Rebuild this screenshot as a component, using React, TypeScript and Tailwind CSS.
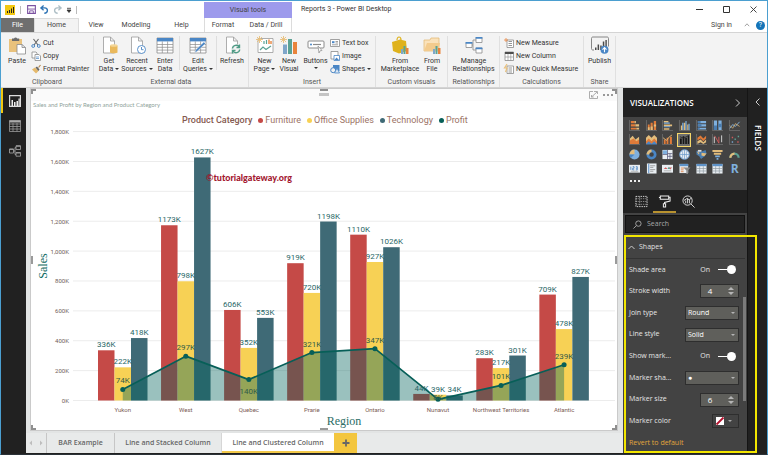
import React from "react";

const BLUE = "#4a86c5";
const STEEL = "#7fa6c9";
const ORANGE = "#e8843c";
const TAN = "#e9c07a";
const GREY = "#8a8a8a";
const TEAL = "#5ba294";

type IconProps = { children: React.ReactNode; box?: string; className?: string };

function Icon({ children, box = "0 0 18 18", className = "size-[18px]" }: IconProps) {
  return (
    <svg viewBox={box} className={`shrink-0 overflow-visible ${className}`} fill="none" aria-hidden="true">
      {children}
    </svg>
  );
}

/* ---------- Ribbon icons ---------- */

const page = <path d="M3.5 1h7l4 4v12h-11z M10.5 1v4h4" fill="#fff" stroke="#9a9a9a" strokeWidth=".8" />;
const tableArt = (
  <>
    <path d="M1 2h16v15H1z" fill="#fff" stroke={GREY} strokeWidth=".8" />
    <path d="M1 2h16v3.4H1z" fill={BLUE} />
    <path d="M1 8.5h16M1 11.3h16M1 14.1h16M6.3 5.4V17M11.6 5.4V17" stroke={GREY} strokeWidth=".7" />
  </>
);

const art = {
  paste: (
    <>
      <path d="M1 3h13v13H1z" fill="#e9c27c" />
      <path d="M4 2.5h2a1.8 1.8 0 0 1 3.2 0h2V5H4z" fill="#6c6c6c" />
      <path d="M9 8.500h5l3.500 3v6.500H9z M14 8.500v3h3.500" fill="#fff" stroke={GREY} strokeWidth=".8" />
    </>
  ),
  getData: (
    <>
      {page}
      <path d="M10 9.500v7c0 1 7.500 1 7.500 0v-7z" fill="#eab95c" />
      <ellipse cx="13.750" cy="9.500" rx="3.750" ry="1.300" fill="#f4d697" />
    </>
  ),
  recent: (
    <>
      {page}
      <circle cx="13.500" cy="13.500" r="4" fill="#fff" stroke={BLUE} strokeWidth=".9" />
      <path d="M13.500 11v2.700h2" stroke={BLUE} strokeWidth=".9" />
    </>
  ),
  table: tableArt,
  edit: (
    <>
      {tableArt}
      <path d="M16.500 7.500 8.500 15l-2.500 2 .8-3.200 8-7.800z" fill={BLUE} stroke="#fff" strokeWidth=".4" />
    </>
  ),
  refresh: (
    <>
      {page}
      <circle cx="13" cy="13" r="4.800" fill="#f3f3f3" />
      <path d="M9.500 12.500a3.700 3.700 0 0 1 6.800-1.500M16.500 8.500v3h-3M16.700 13.500a3.700 3.700 0 0 1-6.800 1.500M9.500 17.500v-3h3" stroke="#4f9b86" strokeWidth="1.400" />
    </>
  ),
  newPage: (
    <>
      <path d="M2 2.500h15v14H2z" fill="#fff" stroke="#9a9a9a" strokeWidth=".8" />
      <path d="m4 14 3-3 3 2.500 5-3.500M8 8V5M10.500 8V4" stroke={TEAL} strokeWidth="1.200" />
      <path d="M13 8V3.500M15 8V5" stroke={ORANGE} strokeWidth="1.400" />
      <path d="M3.500 0v7M0 3.500h7M1 1l5 5M6 1 1 6" stroke={TAN} strokeWidth=".9" />
    </>
  ),
  newVisual: (
    <>
      <path d="M3 8.500h4V18H3z" fill={STEEL} />
      <path d="M8 3h4v15H8z" fill={TEAL} />
      <path d="M13 6h4v12h-4z" fill={ORANGE} />
      <path d="M3.500 0v7M0 3.500h7M1 1l5 5M6 1 1 6" stroke={TAN} strokeWidth=".9" />
    </>
  ),
  buttons: (
    <>
      <rect x="1" y="5" width="16" height="7" rx="1" fill="#fff" stroke={GREY} />
      <circle cx="4" cy="8.500" r="1" fill={BLUE} />
      <path d="M6 8.500h8" stroke={GREY} strokeWidth="1.200" />
      <path d="m11 10 4 4.500-2 .3-1 2.200z" fill="#fff" stroke={GREY} strokeWidth=".7" />
    </>
  ),
  market: (
    <>
      <path d="M6 4c0-4 4-4 4 0" stroke="#dfb21c" strokeWidth="1.200" />
      <path d="m1 6 8-2.500 6 1.500 1 10-8 2.500L2 15z" fill="#dfb21c" />
      <path d="M10 13h2v5h-2z" fill={STEEL} />
      <path d="M12.500 10h2v8h-2z" fill={TEAL} />
      <path d="M15 12h2.500v6H15z" fill={ORANGE} />
    </>
  ),
  file: (
    <>
      <path d="M1 15V4h6l1-2h8v13z" fill="#fae2bb" stroke="#e3bb7a" strokeWidth=".8" />
      <path d="m1 15 3-8h13l-2 8z" fill="#f3cb8d" />
      <path d="M10 13h2v5h-2z" fill={STEEL} />
      <path d="M12.500 10h2v8h-2z" fill={TEAL} />
      <path d="M15 12h2.500v6H15z" fill={ORANGE} />
    </>
  ),
  relations: (
    <>
      <path d="M4 9h4V4h3M8 9v5h3" stroke={GREY} strokeWidth=".8" />
      <path d="M1 6.500h6v5H1zM11 1.500h6v5h-6zM11 12h6v5h-6z" fill="#fff" stroke={GREY} strokeWidth=".8" />
      <path d="M.6 6h6.800v1.800H.6zM10.600 1h6.800v1.800h-6.800zM10.600 11.500h6.800v1.800h-6.800z" fill={BLUE} />
    </>
  ),
  publish: (
    <>
      <path d="M3 14H2c-1 0-1.500-.5-1.500-1.500v-10C.5 1.500 1 1 2 1h14c1 0 1.500.500 1.500 1.500v8" stroke="#6a6a6a" strokeWidth=".8" />
      <path d="M4 11.500h1.500V14H4zM6.600 8.500h1.500V14H6.600zM9.200 9.500h1.500V14H9.200zM11.800 5.500h1.500V12h-1.500zM14.400 4h1.400v7h-1.400z" fill="#4a4a4a" />
      <circle cx="13.500" cy="13.800" r="4" fill={BLUE} />
      <path d="M13.500 16.300v-4.500m-2 1.800 2-2 2 2" stroke="#fff" strokeWidth="1.100" />
    </>
  ),
};

const smallArt = {
  cut: (
    <>
      <path d="M2.500 1 7 7M7.500 1 3 7" stroke="#666" strokeWidth="1.100" />
      <circle cx="2.200" cy="8" r="1.400" stroke={BLUE} />
      <circle cx="7.800" cy="8" r="1.400" stroke={BLUE} />
    </>
  ),
  copy: (
    <>
      <path d="M1 1h4l1 1v5H1z" fill="#fff" stroke={GREY} strokeWidth=".8" />
      <path d="M4 3.500h4l1.500 1.500v4.500H4z" fill="#fff" stroke={GREY} strokeWidth=".8" />
      <path d="M5 6h3M5 7.500h3" stroke={BLUE} strokeWidth=".7" />
    </>
  ),
  painter: (
    <>
      <path d="m1 5.500 3-2 3.500 3.500L5 9.500z" fill="#e5b96b" />
      <path d="m4.500 3.500 1.500-1 2.500 3L7.300 7z" fill="#666" />
      <path d="M7.500 3.500 9.500 1" stroke="#b4864a" strokeWidth="1.200" />
    </>
  ),
  textBox: (
    <>
      <path d="M.5 1.500h9v7h-9z" fill="#fff" stroke={GREY} strokeWidth=".8" />
      <path d="M2 3.200h2.500v2H2z" fill={BLUE} />
      <path d="M5.500 3.500H8M5.500 5H8M2 6.800h6" stroke="#777" strokeWidth=".7" />
    </>
  ),
  image: (
    <>
      <path d="M1 .5h7v7.500H1z" fill="#fff" stroke={GREY} strokeWidth=".8" />
      <path d="M4 4.500h5.500v5H4z" fill="#fff" stroke={BLUE} strokeWidth=".8" />
      <path d="m4.500 9 2-2.500L9 9z" fill={BLUE} />
    </>
  ),
  shapes: (
    <>
      <path d="M3 1h6.500v6H3z" fill={BLUE} />
      <circle cx="3.200" cy="6.200" r="2.500" fill="#f3f3f3" stroke={BLUE} />
      <path d="m7 4 2.500 5h-5z" fill="#dbe8f5" stroke={BLUE} strokeWidth=".8" />
    </>
  ),
  measure: (
    <>
      <path d="M3 2h6.500v7.500H3z" fill="#fff" stroke={GREY} strokeWidth=".8" />
      <path d="M4.500 3.500H8M4.500 5.500H8M4.500 7.500H8" stroke={GREY} strokeWidth=".9" />
      <path d="M2 0v4M0 2h4" stroke={ORANGE} strokeWidth=".8" />
    </>
  ),
  column: (
    <>
      <path d="M1 1h8.500v8.500H1z" fill="#fff" stroke={GREY} strokeWidth=".8" />
      <path d="M1 1h8.500v2H1z" fill="#4d4d4d" />
      <path d="M4 3v6.500M6.800 3v6.500M1 6h8.500" stroke={GREY} strokeWidth=".6" />
    </>
  ),
  quick: (
    <>
      <path d="M3 2h6.500v7.500H3z" fill="#fff" stroke={GREY} strokeWidth=".8" />
      <path d="M4.500 4H8M4.500 6H8M4.500 8H8" stroke={GREY} strokeWidth=".9" />
      <path d="M3 0 .5 4H3L1.500 8" stroke={TAN} strokeWidth="1.200" />
    </>
  ),
};

function Caret() {
  return <span className="ml-[2px] inline-block border-x-2 border-t-2 border-x-transparent border-t-[#333] align-middle" />;
}

type BigButtonProps = { icon: keyof typeof art; lines: string[]; width: string; caret?: "inline" | "below" };

function BigButton({ icon, lines, width, caret }: BigButtonProps) {
  return (
    <button className={`flex shrink-0 flex-col items-center whitespace-nowrap ${width}`}>
      <Icon>{art[icon]}</Icon>
      <span className="mt-[3px] text-center leading-[8px]">
        {lines.map((line, i) => (
          <span key={line} className="block">
            {line}
            {caret === "inline" && i === lines.length - 1 && <Caret />}
          </span>
        ))}
        {caret === "below" && <span className="block leading-[6px]"><Caret /></span>}
      </span>
    </button>
  );
}

function SmallButton({ icon, label, caret }: { icon: keyof typeof smallArt; label: string; caret?: boolean }) {
  return (
    <button className="flex h-[13px] items-center gap-[2px] whitespace-nowrap leading-[8px]">
      <Icon box="0 0 10 10" className="size-[10px]">{smallArt[icon]}</Icon>
      <span>{label}{caret && <Caret />}</span>
    </button>
  );
}

function Group({ label, width, pad = "pl-0", children }: { label: string; width: string; pad?: string; children: React.ReactNode }) {
  return (
    <section className={`flex shrink-0 flex-col border-r border-[#e0e0e0] ${width}`}>
      <div className={`flex flex-1 items-start ${pad}`}>{children}</div>
      <h2 className="text-center leading-[10px] text-[#555]">{label}</h2>
    </section>
  );
}

function Stack({ children }: { children: React.ReactNode }) {
  return <div className="flex flex-col">{children}</div>;
}

const Rule = () => <span className="h-[34px] w-px shrink-0 bg-[#dedede]" />;

function Ribbon() {
  return (
    <div className="flex h-[56px] shrink-0 border-y border-[#d4d4d4] bg-[#f3f3f3] pt-[3px] font-[Roboto,sans-serif] text-[7px] text-[#333]">
      <Group label="Clipboard" width="w-[93px]" pad="pl-[2px]">
        <BigButton icon="paste" lines={["Paste"]} width="w-[28px]" />
        <Stack>
          <SmallButton icon="cut" label="Cut" />
          <SmallButton icon="copy" label="Copy" />
          <SmallButton icon="painter" label="Format Painter" />
        </Stack>
      </Group>
      <Group label="External data" width="w-[155px]" pad="pl-[1px]">
        <BigButton icon="getData" lines={["Get", "Data"]} width="w-[28px]" caret="inline" />
        <BigButton icon="recent" lines={["Recent", "Sources"]} width="w-[28px]" caret="inline" />
        <BigButton icon="table" lines={["Enter", "Data"]} width="w-[28px]" />
        <Rule />
        <BigButton icon="edit" lines={["Edit", "Queries"]} width="w-[36px]" caret="inline" />
        <Rule />
        <BigButton icon="refresh" lines={["Refresh"]} width="w-[30px]" />
      </Group>
      <Group label="Insert" width="w-[127px]" pad="pl-[3px]">
        <BigButton icon="newPage" lines={["New", "Page"]} width="w-[25px]" caret="inline" />
        <BigButton icon="newVisual" lines={["New", "Visual"]} width="w-[24px]" />
        <BigButton icon="buttons" lines={["Buttons"]} width="w-[29px]" caret="below" />
        <Stack>
          <SmallButton icon="textBox" label="Text box" />
          <SmallButton icon="image" label="Image" />
          <SmallButton icon="shapes" label="Shapes" caret />
        </Stack>
      </Group>
      <Group label="Custom visuals" width="w-[72px]" pad="pl-[3px]">
        <BigButton icon="market" lines={["From", "Marketplace"]} width="w-[42px]" />
        <BigButton icon="file" lines={["From", "File"]} width="w-[22px]" />
      </Group>
      <Group label="Relationships" width="w-[52px]">
        <BigButton icon="relations" lines={["Manage", "Relationships"]} width="w-full" />
      </Group>
      <Group label="Calculations" width="w-[84px]" pad="pl-[4px]">
        <Stack>
          <SmallButton icon="measure" label="New Measure" />
          <SmallButton icon="column" label="New Column" />
          <SmallButton icon="quick" label="New Quick Measure" />
        </Stack>
      </Group>
      <Group label="Share" width="w-[32px]">
        <BigButton icon="publish" lines={["Publish"]} width="w-full" />
      </Group>
    </div>
  );
}

/* ---------- Title bar and ribbon tabs ---------- */

function TitleBar() {
  return (
    <header className="flex h-[17px] shrink-0 bg-white font-[Roboto,sans-serif]">
      <div className="flex w-[203px] items-center pl-[4px]">
        <Icon box="0 0 10 10" className="size-[10px]">
          <path d="M0 0h10v10H0z" fill="#f2c811" />
          <path d="M2 6h1v2H2zM4 5h1v3H4zM6 3.500h1V8H6zM8 2h1v6H8z" fill="#222" />
        </Icon>
        <span className="mx-[5px] h-[8px] w-px bg-[#bbb]" />
        <button aria-label="Save" className="ml-[1px]">
          <Icon box="0 0 10 10" className="size-[9px]">
            <path d="M.7.700h8.600v8.600H.700z" stroke="#7b52a1" strokeWidth="1.200" />
            <path d="M1 4.500h8M3 9V6.500h4V9" stroke="#7b52a1" />
          </Icon>
        </button>
        <button aria-label="Undo" className="ml-[4px]">
          <Icon box="0 0 10 10" className="size-[9px]">
            <path d="M4 .5 1 3.200l3 2.700M1.500 3.200h3.800c4 0 4 6-.5 6" stroke="#2f74b5" strokeWidth="1.500" />
          </Icon>
        </button>
        <button aria-label="Redo" className="ml-[4px]">
          <Icon box="0 0 10 10" className="size-[9px]">
            <path d="m6 .5 3 2.700-3 2.700M8.500 3.200H4.700c-4 0-4 6 .5 6" stroke="#aebfc6" strokeWidth="1.500" />
          </Icon>
        </button>
        <button aria-label="Customize toolbar" className="ml-[4px]">
          <Icon box="0 0 6 6" className="size-[6px]">
            <path d="M1 1.300h4M1 3h4L3 5.500z" stroke="#333" strokeWidth=".8" fill="#333" />
          </Icon>
        </button>
        <span className="ml-[4px] h-[8px] w-px bg-[#bbb]" />
      </div>
      <div className="mt-px flex w-[88px] items-center justify-center bg-[#9d9aec] text-[7px] text-[#444]">Visual tools</div>
      <h1 className="ml-[9px] text-[7px] leading-[17px] text-[#333]">Reports 3 - Power BI Desktop</h1>
      <div className="ml-auto flex items-center gap-[20px] pr-[10px]">
        <button aria-label="Minimize"><Icon box="0 0 7 7" className="size-[7px]"><path d="M0 3.500h7" stroke="#333" /></Icon></button>
        <button aria-label="Maximize"><Icon box="0 0 7 7" className="size-[7px]"><path d="M.5.500h6v6h-6z" stroke="#333" /></Icon></button>
        <button aria-label="Close"><Icon box="0 0 7 7" className="size-[7px]"><path d="m.5.500 6 6m0-6-6 6" stroke="#333" strokeWidth=".9" /></Icon></button>
      </div>
    </header>
  );
}

function Tabs() {
  return (
    <nav className="flex h-[14px] shrink-0 bg-white font-[Roboto,sans-serif] text-[7px] leading-[14px] text-[#444]">
      <button className="w-[33px] bg-[#6f6f6f] text-white">File</button>
      <button className="-mb-px w-[45px] border border-b-0 border-[#dcdcdc] bg-[#f3f3f3] pb-px leading-[13px]">Home</button>
      <button className="w-[34px]">View</button>
      <button className="w-[46px]">Modeling</button>
      <button className="w-[45px]">Help</button>
      <div className="flex w-[88px] border-x border-[#dcdcdc]">
        <button className="w-[36px]">Format</button>
        <button className="flex-1">Data / Drill</button>
      </div>
      <div className="ml-auto flex items-center pr-[2px]">
        <button>Sign in</button>
        <button aria-label="Collapse ribbon" className="ml-[12px]">
          <Icon box="0 0 6 6" className="size-[6px]"><path d="m.8 4.200 2.200-2.400 2.200 2.400" stroke={GREY} strokeWidth=".8" /></Icon>
        </button>
        <button className="ml-[6px] size-[9px] rounded-full bg-[#1474b8] text-[7px] leading-[9px] text-white">?</button>
      </div>
    </nav>
  );
}

/* ---------- Chart ---------- */

const data = [
  { name: "Yukon", bars: [336, 222, 418], profit: 74 },
  { name: "West", bars: [1173, 798, 1627], profit: 297 },
  { name: "Quebec", bars: [606, 352, 553], profit: 140, below: true },
  { name: "Prarie", bars: [919, 720, 1198], profit: 321 },
  { name: "Ontario", bars: [1110, 927, 1026], profit: 347 },
  { name: "Nunavut", bars: [44, 39, 34], profit: 8 },
  { name: "Northwest Territories", bars: [283, 217, 301], profit: 101 },
  { name: "Atlantic", bars: [709, 478, 827], profit: 239 },
];
const barFills = ["#c54a47", "#f7d155", "#3f6a76"];
const BASE = 272.5;
const BAR = 16.5;
const yOf = (v: number) => BASE - v * 0.1494;
const groupX = (i: number) => 67 + i * 63.05;
const midX = (i: number) => groupX(i) + BAR * 1.5;
const ticks = [0, 200, 400, 600, 800, 1000, 1200, 1400, 1600, 1800];

function Plot() {
  const line = data.map((d, i) => `${midX(i)},${yOf(d.profit)}`).join(" ");
  return (
    <svg viewBox="0 0 586 302" className="min-h-0 w-full flex-1 font-[Roboto,sans-serif]" role="img" aria-label="Sales and Profit by Region and Product Category">
      {ticks.map((t) => (
        <g key={t}>
          <path d={`M42 ${yOf(t)}H584`} stroke="#ececec" strokeWidth="1" />
          <text x="38" y={yOf(t) + 2.5} textAnchor="end" fontSize="6" fill="#6f5c58">{`${t.toLocaleString("en-US")}K`}</text>
        </g>
      ))}
      {data.map((d, i) =>
        d.bars.map((v, j) => (
          <rect key={`${d.name}${j}`} x={groupX(i) + j * BAR} y={yOf(v)} width={BAR} height={v * 0.1494} fill={barFills[j]} />
        )),
      )}
      <polygon points={`${midX(0)},${BASE} ${line} ${midX(7)},${BASE}`} fill="#02645c" fillOpacity=".4" />
      <polyline points={line} fill="none" stroke="#075f58" strokeWidth="1.700" strokeLinejoin="round" />
      {data.map((d, i) => (
        <g key={d.name} textAnchor="middle">
          <circle cx={midX(i)} cy={yOf(d.profit)} r="2.500" fill="#075f58" />
          {d.bars.map((v, j) => (
            <text key={j} x={groupX(i) + (j + 0.5) * BAR} y={yOf(v) - 3} fontSize="8" fill="#2a6768">{`${v}K`}</text>
          ))}
          <text x={midX(i)} y={yOf(d.profit) + (d.below ? 14 : d.profit < 10 ? 1 : -6)} fontSize="8" fill="#335c48">{`${d.profit}K`}</text>
          <text x={midX(i)} y="284" fontSize="6" fill="#7c5c55">{d.name}</text>
        </g>
      ))}
      <text x="313" y="297" textAnchor="middle" fontSize="12" fill="#2c6d66" className="font-['Liberation_Serif',serif]">Region</text>
      <text x="16" y="138" textAnchor="middle" fontSize="12" fill="#0d6b62" transform="rotate(-90 16 138)" className="font-['Liberation_Serif',serif]">Sales</text>
      <text x="175" y="53" fontSize="9" fontWeight="900" fill="#a3182f" className="font-[Lato,sans-serif]">©tutorialgateway.org</text>
    </svg>
  );
}

function LegendItem({ dot, label }: { dot: string; label: string }) {
  return (
    <li className="flex items-center gap-[2px]">
      <span className={`size-[5px] rounded-full ${dot}`} />
      {label}
    </li>
  );
}

function Visual() {
  return (
    <div className="relative flex min-h-0 flex-1 flex-col border border-[#cacaca] bg-white">
      <div className="flex h-[12px] shrink-0 items-center justify-end gap-[5px] bg-[#fafafa] pr-[4px]">
        <button aria-label="Focus mode">
          <Icon box="0 0 9 8" className="h-[8px] w-[9px]"><path d="M4 .5H.5v7h8V5M5 .5h3.500V3M8 1 2.500 6M2.500 4v2h2.200" stroke="#999" strokeWidth=".8" /></Icon>
        </button>
        <button aria-label="More options" className="flex gap-[2px]">
          <i className="size-[2px] bg-[#999]" /><i className="size-[2px] bg-[#999]" /><i className="size-[2px] bg-[#999]" />
        </button>
      </div>
      <h2 className="h-[11px] shrink-0 pl-[2px] font-[Lato,sans-serif] text-[6px] leading-[8px] text-[#8fa39b]">Sales and Profit by Region and Product Category</h2>
      <ul className="flex h-[16px] shrink-0 items-center gap-[6px] pl-[151px] font-[Roboto,sans-serif] text-[9px] leading-[16px] whitespace-nowrap text-[#9b7265]">
        <li className="font-medium text-[#855a50]">Product Category</li>
        <LegendItem dot="bg-[#c54a47]" label="Furniture" />
        <LegendItem dot="bg-[#f7d155]" label="Office Supplies" />
        <LegendItem dot="bg-[#3f6a76]" label="Technology" />
        <LegendItem dot="bg-[#075f58]" label="Profit" />
      </ul>
      <Plot />
      <span className="absolute top-0 left-0 size-[5px] border-t-2 border-l-2 border-[#8f8f8f]" />
      <span className="absolute top-0 right-0 size-[5px] border-t-2 border-r-2 border-[#8f8f8f]" />
      <span className="absolute bottom-0 left-0 size-[5px] border-b-2 border-l-2 border-[#8f8f8f]" />
      <span className="absolute right-0 bottom-0 size-[5px] border-r-2 border-b-2 border-[#8f8f8f]" />
      <span className="absolute top-1/2 left-0 h-[8px] w-[2px] -translate-y-1/2 bg-[#9a9a9a]" />
      <span className="absolute top-1/2 right-0 h-[8px] w-[2px] -translate-y-1/2 bg-[#9a9a9a]" />
      <span className="absolute top-0 left-1/2 h-[2px] w-[8px] -translate-x-1/2 bg-[#8f8f8f]" />
      <span className="absolute top-[4px] left-1/2 h-[3px] w-[10px] -translate-x-1/2 bg-[#c4c4c4]" />
      <span className="absolute bottom-0 left-1/2 h-[2px] w-[8px] -translate-x-1/2 bg-[#9a9a9a]" />
    </div>
  );
}

function PageTabs() {
  return (
    <nav className="flex h-[20px] shrink-0 bg-[#e8eaea] text-[7px] text-[#666]">
      <button aria-label="Previous page" className="w-[10px] text-[#bbb]">
        <Icon box="0 0 4 6" className="mx-auto h-[6px] w-[4px]"><path d="M3 .5v5L.5 3z" fill="#bdbdbd" /></Icon>
      </button>
      <button aria-label="Next page" className="w-[11px] border-r border-[#c6c6c6]">
        <Icon box="0 0 4 6" className="mx-auto h-[6px] w-[4px]"><path d="M1 .5v5L3.500 3z" fill="#bdbdbd" /></Icon>
      </button>
      <button className="w-[68px] border-r border-[#c6c6c6] font-semibold">BAR Example</button>
      <button className="w-[107px] border-r border-[#d6d6d6] font-semibold">Line and Stacked Column</button>
      <button className="w-[112px] border-b-2 border-[#f2c94a] bg-white pt-[2px] font-semibold">Line and Clustered Column</button>
      <button aria-label="New page" className="flex w-[23px] items-center justify-center bg-[#f3c63f]">
        <Icon box="0 0 8 8" className="size-[8px]"><path d="M4 .5v7M.5 4h7" stroke="#666" strokeWidth="1.800" /></Icon>
      </button>
    </nav>
  );
}

/* ---------- Left rail ---------- */

function Rail() {
  return (
    <aside className="flex w-[25px] shrink-0 flex-col bg-[#212121]">
      <button aria-label="Report" className="flex h-[25px] items-center justify-center border-l-2 border-[#f2c811]">
        <Icon box="0 0 12 12" className="size-[12px]">
          <path d="M.6.600h10.800v10.800H.600z" stroke="#ddd" strokeWidth="1.200" />
          <path d="M2.500 5h1.500v6H2.500zM5 7h1.500v4H5zM7.500 6H9v5H7.500zM9.500 3.500h1.200V11H9.500z" fill="#eee" />
        </Icon>
      </button>
      <button aria-label="Data" className="flex h-[25px] items-center justify-center pl-[2px]">
        <Icon box="0 0 12 12" className="size-[12px]">
          <path d="M.5.500h11v11H.500zM.5 4h11M.5 6.500h11M.5 9h11M4 3v8.500M8 3v8.500" stroke="#999" strokeWidth=".8" />
          <path d="M.5.500h11v2H.500z" fill="#aaa" />
        </Icon>
      </button>
      <button aria-label="Model" className="flex h-[25px] items-center justify-center pl-[2px]">
        <Icon box="0 0 12 12" className="size-[12px]">
          <path d="M.5 4h4v4h-4zM7 .800h4.500v3.700H7zM7 7.500h4.500v3.700H7zM4.500 6H6V2.600h1M6 6v3.500h1" stroke="#999" strokeWidth=".9" />
          <path d="M.5 3.700h4v1.300h-4zM7 .500h4.500v1.300H7zM7 7.200h4.500v1.300H7z" fill="#999" />
        </Icon>
      </button>
    </aside>
  );
}

/* ---------- Visualizations pane ---------- */

const axes = <path d="M.5 0v11.500H12" stroke="#7a7a7a" strokeWidth=".7" />;
const O = "#e07b39";
const B = "#7fb0de";
const T = "#e3bd7c";
const W = "#e9eef2";
const grid = (
  <>
    <path d="M.5 1h11v10.500H.500z" fill={W} />
    <path d="M.5 1h11v2.500H.500z" fill="#5f93c8" />
    <path d="M.5 6h11M.5 8.700h11M4 3.500v8M8 3.500v8" stroke="#8a949c" strokeWidth=".7" />
  </>
);

const visuals: [string, React.ReactNode][] = [
  ["Stacked bar chart", <>{axes}<path d="M2 1h4v2.500H2zM2 4.700h5v2.500H2zM2 8.400h6v2H2z" fill={O} /><path d="M6 1h1.500v2.500H6zM7 4.700h4v2.500H7zM8 8.400h3v2H8z" fill={T} /></>],
  ["Stacked column chart", <>{axes}<path d="M2 5h2v6H2zM5 3h2.300v8H5zM8.500 1h2.500v10H8.500z" fill={O} /><path d="M2 8h2v3H2zM5 7h2.300v4H5zM8.500 5h2.500v2H8.500z" fill={T} /></>],
  ["Clustered bar chart", <>{axes}<path d="M2 1h5v1.700H2zM2 5h9v1.700H2zM2 9h6v1.700H2z" fill={T} /><path d="M2 2.700h6.500v1.300H2zM2 6.700h7v1.300H2z" fill={B} /></>],
  ["Clustered column chart", <>{axes}<path d="M2 6h1.500v5H2zM5.500 3H7v8H5.500zM9 5h1.300v6H9z" fill={T} /><path d="M3.500 3H5v8H3.500zM7 1h1.300v10H7zM10.300 4h1.300v7h-1.300z" fill={B} /></>],
  ["100% stacked bar chart", <>{axes}<path d="M2 1h9v2.500H2zM2 4.700h9v2.500H2zM2 8.400h9v2H2z" fill={B} /><path d="M2 1h3v2.500H2zM2 4.700h4v2.500H2zM2 8.400h2v2H2z" fill="#4a7db0" /></>],
  ["100% stacked column chart", <>{axes}<path d="M2 .500h3.500v10.500H2zM7 .500h3.500v10.500H7z" fill={B} /><path d="M2 6h3.500v5H2zM7 4h3.500v4H7z" fill="#4a7db0" /></>],
  ["Line chart", <>{axes}<path d="m1 9 3-4 3 2 4.500-5" stroke={B} /><path d="m1 6 3 3 3-5 4.500 3" stroke={T} strokeWidth=".8" /></>],
  ["Area chart", <>{axes}<path d="M1 11V5l3-3 3 4 4-3v8z" fill={T} /><path d="M1 11V7l4-2 3 3 3-2v5z" fill={O} /></>],
  ["Stacked area chart", <><path d="M0 11V4l3-3 3 3 3-3 3 3v7z" fill={T} /><path d="M0 8 3 5l3 3 3-3 3 3v3H0z" fill={O} /><path d="m0 11 3-3 3 2.500L9 8l3 3v.500H0z" fill="#4a86c5" /></>],
  ["Line and stacked column chart", <>{axes}<path d="M2 6h2v5H2zM5 4h2v7H5zM8.500 3h2.300v8H8.500z" fill={O} /><path d="m1 4 4 3 3-4 3-2" stroke={T} strokeWidth=".9" /></>],
  ["Line and clustered column chart", <><path d="M1 5h2v6H1zM4 2.500h1.800V11H4zM6.800 4h1.800v7H6.800zM9.500 1.500H11V11H9.500z" fill="#161616" /><path d="m1 3 4 1.500 6-3" stroke="#2a2a2a" /></>],
  ["Ribbon chart", <>{axes}<path d="M1.500 4 5 1.500 8 5l3-3v3L8 8 5 5 1.500 7z" fill={O} /><path d="M1.500 8 5 6l3 3 3-3v3l-3 2-3-2-3.500 2z" fill={T} /></>],
  ["Waterfall chart", <>{axes}<path d="M2.500 10V3M10.500 9V1.500" stroke="#ddd" /><path d="m3 2 4.500 8V3" stroke="#d05b5b" /></>],
  ["Scatter chart", <>{axes}<path d="M3 3h1.500v1.500H3zM9 8h1.500v1.500H9z" fill="#d05b5b" /><path d="M6 5h1.500v1.500H6zM9.500 2H11v1.500H9.500z" fill={TEAL} /><path d="M3 8h1.500v1.500H3z" fill={B} /></>],
  ["Pie chart", <><circle cx="6" cy="6" r="5.500" fill={B} /><path d="M6 6V.500A5.500 5.500 0 0 0 .5 6z" fill={T} /><path d="M6 6 2 9.800A5.500 5.500 0 0 1 .5 6z" fill="#4a86c5" /></>],
  ["Donut chart", <><circle cx="6" cy="6" r="4" stroke="#4a86c5" strokeWidth="3" /><path d="M2 6a4 4 0 0 1 4-4" stroke={T} strokeWidth="3" /></>],
  ["Treemap", <><path d="M.5 1h11v10H.500z" fill={W} /><path d="M6 1v10M.5 6h5.500M6 5h5.500M8.700 5v6M6 8h5.500" stroke="#557" strokeWidth=".8" /><path d="M1 1.500h4.500v4H1z" fill={B} /></>],
  ["Map", <><circle cx="6" cy="6" r="5.300" fill={W} stroke="#5f93c8" /><path d="M6 .7v10.600M.7 6h10.600M3 1.800C4.500 4 4.500 8 3 10.200M9 1.800C7.500 4 7.500 8 9 10.200" stroke="#5f93c8" strokeWidth=".7" /></>],
  ["Filled map", <><path d="m.5 2 5 1 5-2 1 4-2 3-4 3-2-3-3-2z" fill="#4a7db0" /><path d="m6 4 5.500 1L9 8 6 7zM1 3l3 1-1 2z" fill={T} /><path d="M2 1h4v2H2z" fill="#ddd" /></>],
  ["Funnel", <><path d="M.5 1h11v2.300H.500zM2 4h8v2.200H2z" fill={T} /><path d="M3.500 7h5v2h-5zM5 9.700h2v2H5z" fill={B} /></>],
  ["Gauge", <><path d="M1.500 9.500a4.500 4.500 0 0 1 9 0" stroke={TEAL} strokeWidth="2.400" /><path d="M1.500 9.500A4.500 4.500 0 0 1 6 5" stroke={T} strokeWidth="2.400" /></>],
  ["Card", <><path d="M0 2h12v8.500H0z" fill={W} /><path d="M2 4v3.500M4 4h1.500v1.700H4v1.800h1.700M7.500 4H9v3.500H7.500M7.500 5.700H9" stroke="#4a86c5" strokeWidth=".9" /><path d="M2 9h8" stroke="#999" strokeWidth=".7" /></>],
  ["Multi-row card", <><path d="M1 .500h10.500v11H1z" fill={W} /><path d="M3 1v10" stroke="#4a86c5" /><path d="M4.500 3H10M4.500 4.800H8M4.500 7.200H10M4.500 9H8" stroke="#888" strokeWidth=".8" /></>],
  ["KPI", <><path d="M0 2h12v8.500H0z" fill={W} /><path d="m2 6.500 2-2 2 2zM7 5h4L9 7z" fill="#d05b5b" /><path d="M6 6.500 7.500 4 9 6.500z" fill={TEAL} /><path d="M2 8.500h8" stroke="#999" strokeWidth=".7" /></>],
  ["Slicer", <><path d="M.5 1H10v10H.500z" fill={W} /><path d="M.5 1H10v2.500H.500z" fill="#5f93c8" /><path d="M2 5.500h4M2 7.500h3M2 9.500h3" stroke={O} strokeWidth=".9" /><path d="M5 5h7.500L9.700 8.300V12H8V8.300z" fill="#8a8a8a" /></>],
  ["Table", grid],
  ["Matrix", grid],
];

function Gallery() {
  return (
    <div className="h-[73px] shrink-0 bg-[#434343] pt-[1px] pl-[3px]">
      <div className="grid h-[58px] grid-cols-7 grid-rows-4 place-items-center pr-[4px]">
        {visuals.map(([name, drawing], i) => (
          <button key={name} title={name} className={`flex size-[12px] items-center justify-center ${i === 10 ? "bg-[#6e6e6e] ring-1 ring-[#f5d76a]" : ""}`}>
            <Icon box="0 0 12 12" className="size-[11px]">{drawing}</Icon>
          </button>
        ))}
        <button title="R script visual" className="text-[12px] leading-[14px] font-bold text-[#7fb0de]">R</button>
      </div>
      <button aria-label="More visuals" className="mt-[4px] ml-[4px] flex gap-[2px]">
        <i className="size-[2px] bg-[#eee]" /><i className="size-[2px] bg-[#eee]" /><i className="size-[2px] bg-[#eee]" />
      </button>
    </div>
  );
}

function PaneTabs() {
  return (
    <div className="flex h-[23px] shrink-0 bg-[#212121] pl-[6px]">
      <button aria-label="Fields" className="flex w-[24px] items-center justify-center">
        <Icon box="0 0 14 14" className="size-[13px]">
          <path d="M1 1.500h12v11H1z" stroke="#ddd" strokeDasharray="1.500 1" />
          <path d="M1 4h12M1 7h12M1 10h12M5 2v10" stroke="#bbb" strokeWidth=".7" strokeDasharray="1.500 1" />
        </Icon>
      </button>
      <button aria-label="Format" className="flex w-[23px] items-center justify-center border-b-2 border-[#b8922f]">
        <Icon box="0 0 14 14" className="mt-[2px] size-[13px]">
          <path d="M2.500 1h9v3.500h-9zM11.500 2.500H13v4L7 8v1.500M2.500 2.700H1M5.800 9.500h2.400V13H5.800z" stroke="#eee" strokeWidth="1.100" />
        </Icon>
      </button>
      <button aria-label="Analytics" className="flex w-[25px] items-center justify-center">
        <Icon box="0 0 14 14" className="size-[13px]">
          <circle cx="6" cy="6" r="5" stroke="#ddd" />
          <path d="m9.500 9.500 4 4M4 9V6M6 9V3.500M8 9V5M2 6l3-2 3 1 2.500-2" stroke="#ddd" />
        </Icon>
      </button>
    </div>
  );
}

function Row({ label, id, children }: { label: string; id: string; children: React.ReactNode }) {
  return (
    <div className="flex items-center justify-between">
      <label htmlFor={id}>{label}</label>
      {children}
    </div>
  );
}

function Toggle({ id }: { id: string }) {
  return (
    <span className="mr-[3px] flex items-center gap-[8px]">
      On
      <span className="flex items-center">
        <span className="h-px w-[9px] bg-white" />
        <input id={id} type="checkbox" role="switch" defaultChecked className="size-[9px] appearance-none rounded-full bg-white" />
      </span>
    </span>
  );
}

function Stepper({ id, value }: { id: string; value: number }) {
  return (
    <span className="flex h-[14px] w-[39px] items-center border border-[#2e2e2e] bg-[#5f5f5b]">
      <input id={id} type="text" inputMode="numeric" defaultValue={value} className="w-[18px] bg-transparent text-center text-[8px] leading-[12px] text-white" />
      <span className="mr-[4px] ml-auto flex flex-col gap-[2px]">
        <button aria-label="Increase" className="border-x-[3px] border-b-[3px] border-x-transparent border-b-[#b5b5b5]" />
        <button aria-label="Decrease" className="border-x-[3px] border-t-[3px] border-x-transparent border-t-[#b5b5b5]" />
      </span>
    </span>
  );
}

function Picker({ id, value }: { id: string; value: string }) {
  return (
    <span className="flex h-[14px] w-[54px] items-center border border-[#2e2e2e] bg-[#5f5f5b]">
      <select id={id} className="w-full appearance-none bg-transparent pl-[2px] text-[7px] leading-[12px] text-white">
        <option>{value}</option>
      </select>
      <span className="mr-[3px] border-x-2 border-t-2 border-x-transparent border-t-[#b5b5b5]" />
    </span>
  );
}

function FormatPane() {
  return (
    <div className="relative flex min-h-0 flex-1 flex-col bg-[#434343] px-[2px] pt-[2px]">
      <div className="flex h-[18px] shrink-0 items-center border border-[#111] bg-[#212121] pl-[7px]">
        <Icon box="0 0 10 10" className="size-[9px]"><circle cx="6" cy="4" r="3" stroke="#aaa" /><path d="M3.800 6.200.5 9.500" stroke="#aaa" /></Icon>
        <input aria-label="Search" placeholder="Search" className="ml-[5px] min-w-0 flex-1 bg-transparent text-[7px] leading-[12px] placeholder:text-[#a8a8a8]" />
      </div>
      <button className="mt-[3px] flex h-[23px] shrink-0 items-center border-b border-[#333] pl-[3px] text-left text-[7px] text-[#e0e0e0]">
        <Icon box="0 0 7 5" className="mr-[4px] h-[5px] w-[7px]"><path d="m.5 4 3-3 3 3" stroke="#ccc" /></Icon>
        Shapes
      </button>
      <div className="grid min-h-0 flex-1 grid-rows-8 pr-[6px] pl-[4px] text-[7px] text-[#e6e6e6]">
        <Row id="shade" label="Shade area"><Toggle id="shade" /></Row>
        <Row id="stroke" label="Stroke width"><Stepper id="stroke" value={4} /></Row>
        <Row id="join" label="Join type"><Picker id="join" value="Round" /></Row>
        <Row id="style" label="Line style"><Picker id="style" value="Solid" /></Row>
        <Row id="markers" label="Show mark..."><Toggle id="markers" /></Row>
        <Row id="shape" label="Marker sha..."><Picker id="shape" value="●" /></Row>
        <Row id="size" label="Marker size"><Stepper id="size" value={6} /></Row>
        <Row id="color" label="Marker color">
          <button id="color" className="flex h-[14px] w-[27px] items-center gap-[4px] border border-[#2e2e2e] pl-[3px]">
            <Icon box="0 0 8 8" className="size-[8px]"><path d="M0 0h8v8H0z" fill="#fff" /><path d="M.5 7.500 7.500.500" stroke="#b3122e" strokeWidth="1.800" /></Icon>
            <span className="border-x-2 border-t-2 border-x-transparent border-t-[#aaa]" />
          </button>
        </Row>
      </div>
      <button className="h-[21px] shrink-0 pt-[2px] pl-[4px] text-left text-[7px] text-[#e2a73c]">Revert to default</button>
      <span className="absolute top-[84px] right-[1px] h-[104px] w-[3px] bg-[#7b7b7b]" />
      <span className="pointer-events-none absolute top-[22px] -right-[10px] bottom-0 left-[1px] z-10 border-2 border-[#f2e600]" />
    </div>
  );
}

function Panes() {
  return (
    <>
      <aside className="flex w-[125px] shrink-0 flex-col border-r border-[#151515] bg-[#212121]">
        <div className="flex h-[29px] shrink-0 items-center justify-between pr-[7px] pl-[7px]">
          <h2 className="text-[8px] font-semibold text-white">VISUALIZATIONS</h2>
          <button aria-label="Collapse visualizations"><Icon box="0 0 5 8" className="h-[8px] w-[5px]"><path d="m1 .5 3.500 3.500L1 7.500" stroke="#ccc" /></Icon></button>
        </div>
        <Gallery />
        <PaneTabs />
        <FormatPane />
      </aside>
      <aside className="flex w-[19px] shrink-0 flex-col items-center bg-[#212121]">
        <button aria-label="Expand fields" className="mt-[10px]"><Icon box="0 0 5 8" className="h-[8px] w-[5px]"><path d="M4.500.500 1 4l3.500 3.500" stroke="#ccc" /></Icon></button>
        <h2 className="mt-[19px] text-[8px] leading-[12px] font-semibold text-white [writing-mode:vertical-rl]">FIELDS</h2>
      </aside>
    </>
  );
}

export default function App() {
  return (
    <div className="flex h-screen flex-col overflow-hidden border border-[#4b9fd0] border-b-[#2b3238] bg-[#212121] font-['Open_Sans','Noto_Sans',sans-serif]">
      <TitleBar />
      <Tabs />
      <Ribbon />
      <div className="flex min-h-0 flex-1 pb-px">
        <Rail />
        <main className="flex min-w-0 flex-1 flex-col bg-[#e2e4e4]">
          <div className="flex min-h-0 flex-1 flex-col pr-[5px] pb-[2px] pl-[4px]">
            <Visual />
          </div>
          <PageTabs />
        </main>
        <Panes />
      </div>
    </div>
  );
}
